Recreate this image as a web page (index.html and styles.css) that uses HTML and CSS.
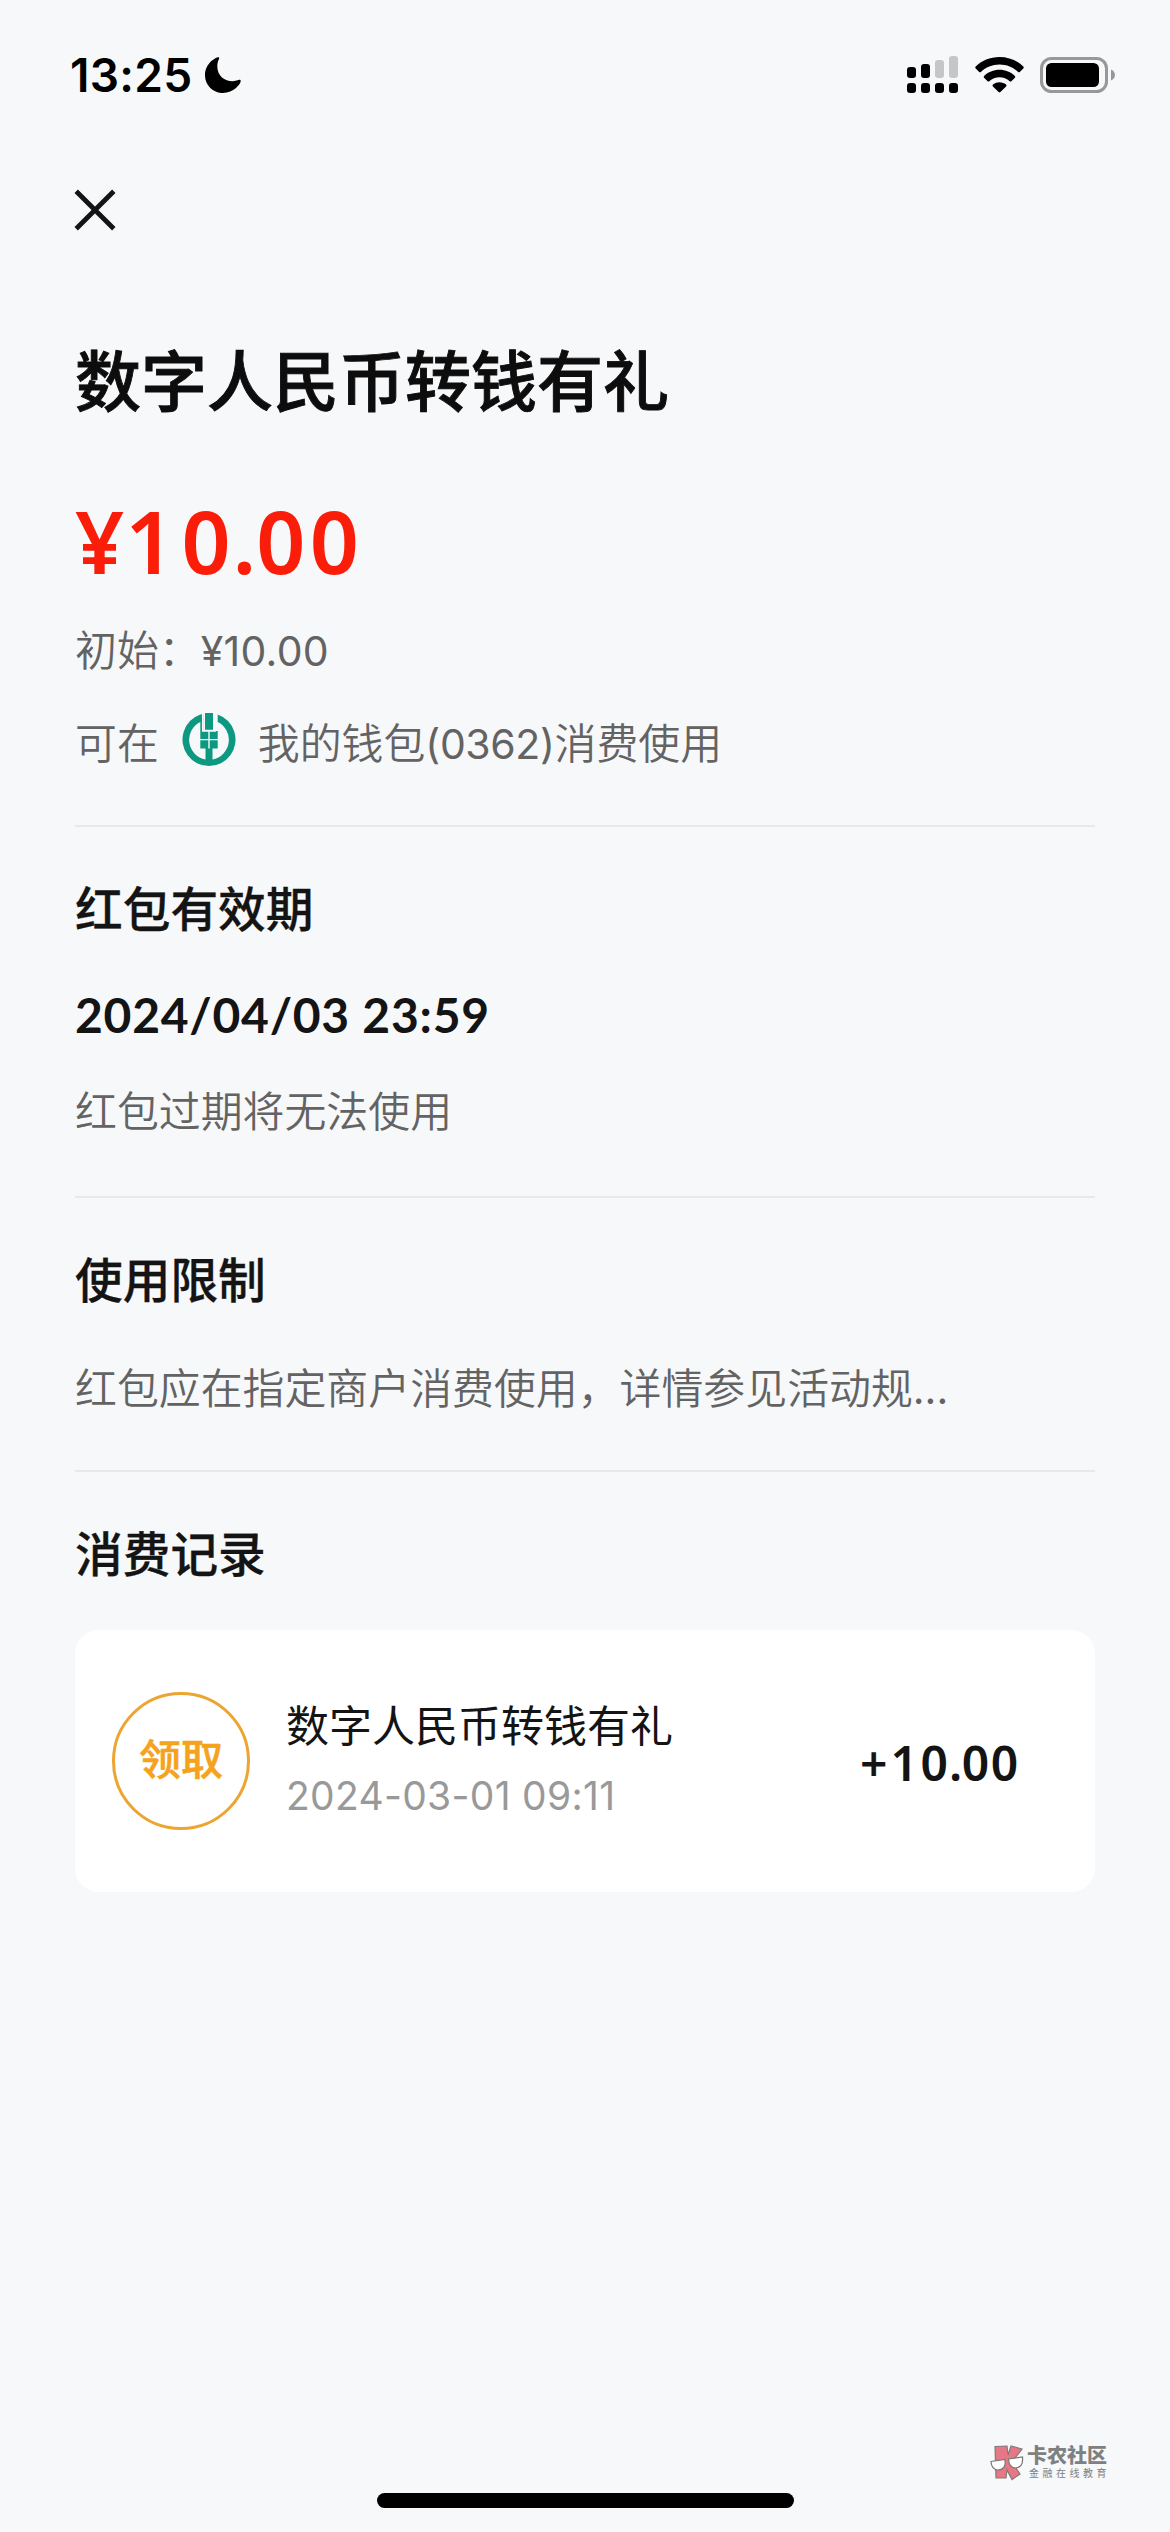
FILE: index.html
```html
<!DOCTYPE html>
<html lang="zh-CN">
<head>
<meta charset="utf-8">
<title>数字人民币转钱有礼</title>
<link rel="stylesheet" href="styles.css">
</head>
<body>
<div class="screen">
  <header class="status">
    <span class="clock">13:25</span>
    <svg class="moon" viewBox="0 0 36 36"><path d="M13.6 .3C12.4-.3 0 5.200 0 18.400a17.600 17.600 0 0 0 18 17.600C28.500 36 35.700 27 35.700 24c0-1.300-1.200-1.300-2.200-.900C24 26.500 12.300 21.500 12.300 9.500c0-3 .6-5.200 1.600-7.300.4-.9.400-1.600-.3-1.900z"/></svg>
    <div class="indicators">
      <svg class="signal" viewBox="0 0 51 38">
        <g fill="#000"><rect x="0" y="11" width="9" height="11" rx="3"/><rect x="14" y="8" width="9" height="14" rx="3"/>
        <rect x="0" y="27" width="9" height="10" rx="3"/><rect x="14" y="27" width="9" height="10" rx="3"/><rect x="28" y="27" width="9" height="10" rx="3"/><rect x="42" y="27" width="9" height="10" rx="3"/></g>
        <g fill="#c5c6c8"><rect x="28" y="4" width="9" height="18" rx="3"/><rect x="42" y="0" width="9" height="22" rx="3"/></g>
      </svg>
      <svg class="wifi" viewBox="0 0 49 36"><path d="M24.500 0C34 0 42.500 3.700 48.300 9.600q.9.900 0 1.800l-3.500 3.500q-.8.800-1.700 0C38.300 10.300 31.700 7.500 24.500 7.500S10.700 10.300 5.900 14.900q-.9.800-1.700 0L.700 11.400q-.9-.9 0-1.800C6.500 3.700 15 0 24.500 0z"/><path d="M24.500 12.800c6 0 11.400 2.300 15.400 6.100q.9.900 0 1.800l-3.500 3.500q-.8.800-1.700 0a15 15 0 0 0-20.400 0q-.9.800-1.700 0l-3.500-3.500q-.9-.9 0-1.800c4-3.800 9.400-6.100 15.400-6.100z"/><path d="M24.500 25.300c2.600 0 4.900.9 6.600 2.300q.9.900 0 1.800l-5.700 5.700q-.9.900-1.800 0l-5.700-5.700q-.9-.9 0-1.800a10.500 10.500 0 0 1 6.600-2.300z"/></svg>
      <svg class="battery" viewBox="0 0 76 36"><rect x="1.500" y="1.500" width="65" height="33" rx="10" fill="none" stroke="#97989a" stroke-width="3"/><rect x="6" y="6" width="53" height="24" rx="5.500"/><path d="M71 12.500c5.300 2 5.300 9 0 11z" fill="#97989a"/></svg>
    </div>
  </header>

  <nav class="nav">
    <svg class="close" viewBox="0 0 42 42"><path d="M2.200 2.200 39.800 39.800M39.800 2.200 2.200 39.800" stroke="#141414" stroke-width="4.800"/></svg>
  </nav>

  <main class="content">
    <section class="summary">
      <h1 class="title">数字人民币转钱有礼</h1>
      <p class="amount"><span class="sign">¥</span><span class="one">1</span><span class="unit">0</span><span class="dot">.</span>00</p>
      <p class="note initial">初始：<span class="num">¥10.00</span></p>
      <p class="note wallet">可在
        <svg class="bank" viewBox="0 0 54 54"><g fill="#0d9882"><path d="M18.300 1.500A26.500 26.500 0 1 0 35.700 1.500V18H31v0h4.700V8.900A20 20 0 0 1 30.500 46.500V35.500h5.200V18H30.600V17H23.400v1H18.300V35.500h5.200V46.500A20 20 0 0 1 18.300 8.900V18H22V1z"/><rect x="23" y="0" width="8" height="17"/></g><path d="M20.900 0V17.800H33.100V0" fill="none" stroke="#f7f8fa" stroke-width="1.900"/><path d="M27 17.500V35.500M18 26.600h18" stroke="#f7f8fa" stroke-width="1.400"/></svg>
        <span>我的钱包<span class="num">(0362)</span>消费使用</span></p>
    </section>

    <section class="validity">
      <h2 class="heading">红包有效期</h2>
      <p class="deadline">2024/04/03 23:59</p>
      <p class="note">红包过期将无法使用</p>
    </section>

    <section class="limits">
      <h2 class="heading">使用限制</h2>
      <p class="note">红包应在指定商户消费使用，详情参见活动规<span class="num">...</span></p>
    </section>

    <section class="records">
      <h2 class="heading">消费记录</h2>
      <div class="card">
        <div class="badge">领取</div>
        <div class="detail">
          <p class="name">数字人民币转钱有礼</p>
          <p class="time">2024-03-01 09:11</p>
        </div>
        <p class="delta"><span class="sign">+</span><span class="one">1</span><span class="unit">0</span><span class="dot">.</span>00</p>
      </div>
    </section>
  </main>

  <footer class="footer">
    <div class="brand">
      <svg class="brand-logo" viewBox="0 0 34 36"><g fill="#e67784" stroke="#85787b" stroke-width="1.200"><path d="M5 1.500 17 1 18 10 21 1 32 4 22 17 30 29 22 34.500 17 25 16 33H6z"/></g><g fill="#fff" stroke="#777" stroke-width="1.200"><path d="M1 16.500 15 14.500Q16.500 24 8.500 25 1.500 25 1 16.500z"/><path d="M18.500 14 32.500 12Q33.500 22 26 23 19 23 18.500 14z"/></g></svg>
      <div class="brand-text">
        <span class="brand-name">卡农社区</span>
        <span class="brand-tag">金融在线教育</span>
      </div>
    </div>
    <div class="home-bar"></div>
  </footer>
</div>
</body>
</html>
```
FILE: styles.css
```css
* { box-sizing: border-box; }
body, h1, h2, p { margin: 0; }
body {
  background: #f7f8fa;
  color: #141414;
  font-family: "Noto Sans CJK SC", sans-serif;
}
svg { display: block; flex: none; }
.screen {
  width: 1170px;
  height: 2532px;
  display: flex;
  flex-direction: column;
}

.status {
  height: 150px;
  padding: 0 54px 0 70px;
  display: flex;
  align-items: center;
  color: #000;
}
.clock {
  font: 600 46px/60px Inter, sans-serif;
  letter-spacing: .3px;
  width: 135px;
  white-space: nowrap;
}
.moon { width: 36px; height: 36px; }
.indicators { margin-left: auto; display: flex; align-items: center; }
.signal { width: 51px; height: 38px; margin-right: 17px; }
.wifi { width: 49px; height: 36px; margin-right: 16px; }
.battery { width: 76px; height: 36px; }

.nav { height: 150px; padding: 39px 74px 0; }
.close { width: 42px; height: 42px; }

.content { padding: 0 75px; }
.summary { height: 527px; border-bottom: 2px solid #e8e9eb; padding-top: 37px; }
.title {
  font-size: 66px;
  line-height: 80px;
  font-weight: 500;
  color: #0d0d0d;
  -webkit-text-stroke: .9px #0d0d0d;
}
.amount {
  margin-top: 74px;
  font: 600 86px/100px "Noto Sans", sans-serif;
  letter-spacing: 4.300px;
  color: #fa1e0a;
}
.amount .sign { letter-spacing: 1px; }
.amount .one { letter-spacing: 7px; }
.amount .unit { letter-spacing: 2px; }
.amount .dot { letter-spacing: 0; }
.note { font-size: 41.9px; line-height: 60px; font-weight: 350; color: #636363; white-space: nowrap; }
.num { font-family: Inter, sans-serif; font-size: 41px; font-weight: 400; line-height: 1; }
.initial { margin-top: 27px; }
.initial .num { letter-spacing: .3px; }
.wallet { margin-top: 33px; display: flex; align-items: center; }
.wallet .num { letter-spacing: -.4px; }
.bank { width: 54px; height: 54px; margin: -2px 22px 0 23px; }

.heading { font-size: 47.700px; line-height: 60px; font-weight: 500; -webkit-text-stroke: .3px #141414; }
.validity { height: 371px; border-bottom: 2px solid #e8e9eb; padding-top: 50px; }
.deadline {
  margin-top: 48px;
  font: 700 48px/60px Lato, sans-serif;
  letter-spacing: .750px;
}
.validity .note { margin-top: 34px; }
.limits { height: 274px; border-bottom: 2px solid #e8e9eb; padding-top: 50px; }
.limits .note { margin-top: 48px; }
.records { padding-top: 50px; }

.card {
  margin-top: 48px;
  height: 262px;
  padding: 0 75px 0 37px;
  display: flex;
  align-items: center;
  background: #fff;
  border-radius: 24px;
}
.badge {
  width: 138px;
  height: 138px;
  border: 3px solid #eda531;
  border-radius: 50%;
  color: #f5a21d;
  font-size: 42px;
  font-weight: 500;
  -webkit-text-stroke: .6px #f5a21d;
  line-height: 123px;
  text-align: center;
}
.detail { margin-left: 36px; padding-bottom: 3px; }
.name { font-size: 43px; line-height: 60px; font-weight: 400; white-space: nowrap; }
.time { margin-top: 13px; font: 400 39px/60px Inter, sans-serif; letter-spacing: .3px; color: #999; }
.delta {
  margin-left: auto;
  padding-top: 3px;
  font: 600 48px/60px "Noto Sans", sans-serif;
  letter-spacing: 1.700px;
}
.delta .sign { letter-spacing: 3px; }
.delta .one { letter-spacing: 2.500px; }
.delta .unit { letter-spacing: 1px; }
.delta .dot { letter-spacing: -.5px; }

.footer {
  margin-top: auto;
  padding-bottom: 24px;
  display: flex;
  flex-direction: column;
  align-items: center;
}
.brand { align-self: flex-end; display: flex; margin: 0 60px 12px 0; }
.brand-logo { width: 34px; height: 36px; margin-right: 3px; }
.brand-text { display: flex; flex-direction: column; color: #808080; white-space: nowrap; }
.brand-name { font-size: 20px; line-height: 20px; font-weight: 900; }
.brand-tag { margin: 2px 0 0 2px; font-size: 10px; line-height: 12px; letter-spacing: 3.500px; }
.home-bar { width: 417px; height: 15px; border-radius: 8px; background: #000; }
```
